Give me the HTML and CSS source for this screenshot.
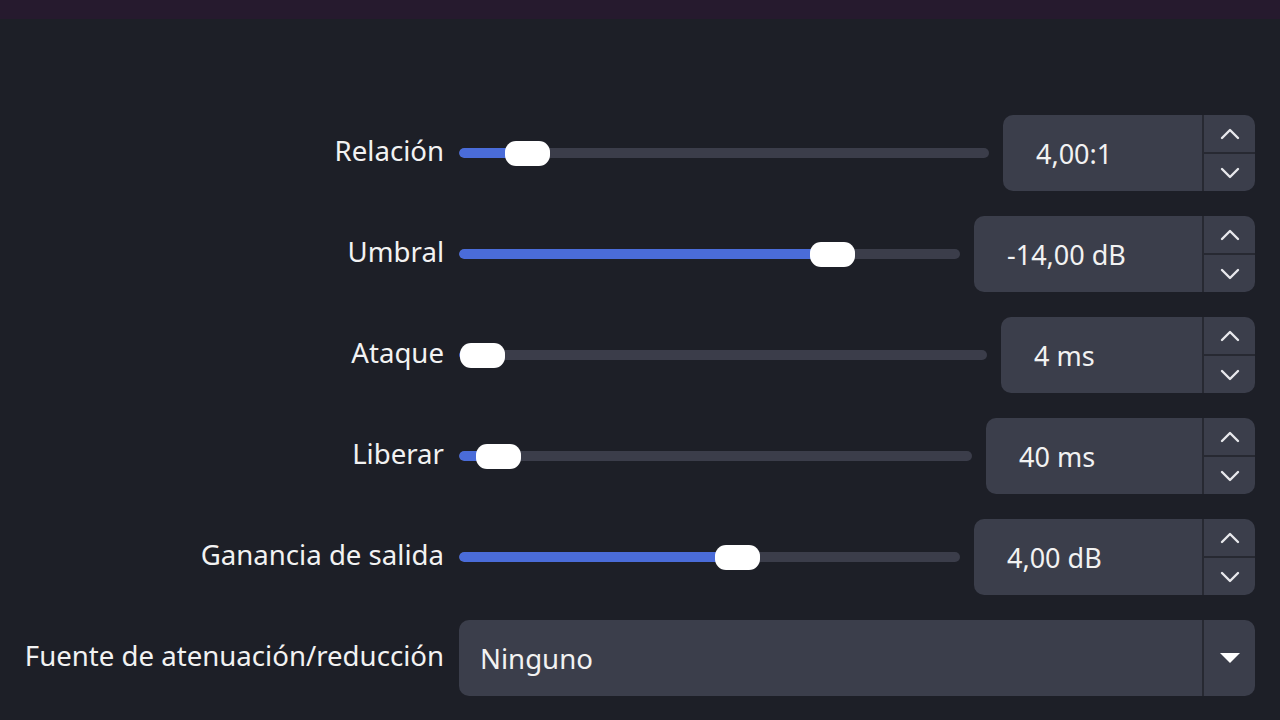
FILE: index.html
```html
<!DOCTYPE html>
<html lang="es">
<head>
    <meta charset="UTF-8">
    <meta name="viewport" content="width=device-width, initial-scale=1.0">
    <title>Compresor</title>
    <link rel="stylesheet" href="styles.css">
</head>
<body>
    <div class="top-strip"></div>
    <div class="form">
        <div class="label">Relación</div>
        <div class="field">
            <div class="slider" style="--p: 0.095">
                <div class="track"><div class="fill"></div></div>
                <div class="handle"></div>
            </div>
            <div class="spin spin-ratio">
                <div class="spin-value">4,00:1</div>
                <div class="spin-buttons">
                    <div class="spin-btn"><svg width="20" height="12" viewBox="0 0 20 12"><path d="M2 10 L10 2 L18 10" /></svg></div>
                    <div class="spin-btn"><svg width="20" height="12" viewBox="0 0 20 12"><path d="M2 2 L10 10 L18 2" /></svg></div>
                </div>
            </div>
        </div>

        <div class="label">Umbral</div>
        <div class="field">
            <div class="slider" style="--p: 0.77">
                <div class="track"><div class="fill"></div></div>
                <div class="handle"></div>
            </div>
            <div class="spin spin-threshold">
                <div class="spin-value">-14,00 dB</div>
                <div class="spin-buttons">
                    <div class="spin-btn"><svg width="20" height="12" viewBox="0 0 20 12"><path d="M2 10 L10 2 L18 10" /></svg></div>
                    <div class="spin-btn"><svg width="20" height="12" viewBox="0 0 20 12"><path d="M2 2 L10 10 L18 2" /></svg></div>
                </div>
            </div>
        </div>

        <div class="label">Ataque</div>
        <div class="field">
            <div class="slider" style="--p: 0.002">
                <div class="track"><div class="fill"></div></div>
                <div class="handle"></div>
            </div>
            <div class="spin spin-attack">
                <div class="spin-value">4 ms</div>
                <div class="spin-buttons">
                    <div class="spin-btn"><svg width="20" height="12" viewBox="0 0 20 12"><path d="M2 10 L10 2 L18 10" /></svg></div>
                    <div class="spin-btn"><svg width="20" height="12" viewBox="0 0 20 12"><path d="M2 2 L10 10 L18 2" /></svg></div>
                </div>
            </div>
        </div>

        <div class="label">Liberar</div>
        <div class="field">
            <div class="slider" style="--p: 0.036">
                <div class="track"><div class="fill"></div></div>
                <div class="handle"></div>
            </div>
            <div class="spin spin-release">
                <div class="spin-value">40 ms</div>
                <div class="spin-buttons">
                    <div class="spin-btn"><svg width="20" height="12" viewBox="0 0 20 12"><path d="M2 10 L10 2 L18 10" /></svg></div>
                    <div class="spin-btn"><svg width="20" height="12" viewBox="0 0 20 12"><path d="M2 2 L10 10 L18 2" /></svg></div>
                </div>
            </div>
        </div>

        <div class="label">Ganancia de salida</div>
        <div class="field">
            <div class="slider" style="--p: 0.561">
                <div class="track"><div class="fill"></div></div>
                <div class="handle"></div>
            </div>
            <div class="spin spin-gain">
                <div class="spin-value">4,00 dB</div>
                <div class="spin-buttons">
                    <div class="spin-btn"><svg width="20" height="12" viewBox="0 0 20 12"><path d="M2 10 L10 2 L18 10" /></svg></div>
                    <div class="spin-btn"><svg width="20" height="12" viewBox="0 0 20 12"><path d="M2 2 L10 10 L18 2" /></svg></div>
                </div>
            </div>
        </div>

        <div class="label">Fuente de atenuación/reducción</div>
        <div class="field">
            <div class="combo">
                <div class="combo-value">Ninguno</div>
                <div class="combo-arrow">
                    <svg width="22" height="12" viewBox="0 0 22 12"><polygon points="1,1 21,1 11,11" /></svg>
                </div>
            </div>
        </div>
    </div>
</body>
</html>
```

FILE: styles.css
```css
body, html {
    margin: 0;
    padding: 0;
    width: 100%;
    height: 100%;
    background: #1d1f27;
    overflow: hidden;
    font-family: 'Noto Sans', 'Open Sans', sans-serif;
    color: #f2f2f2;
}

.top-strip {
    height: 19px;
    background: #261a2e;
}

.form {
    display: grid;
    grid-template-columns: 428px 1fr;
    grid-auto-rows: 76px;
    column-gap: 15px;
    row-gap: 25px;
    padding: 96px 25px 0 16px;
}

.label {
    font-size: 27.6px;
    text-align: right;
    white-space: nowrap;
    align-self: center;
    padding-bottom: 6px;
}

.field {
    display: flex;
    align-items: center;
    gap: 14px;
}

.slider {
    flex: 1;
    position: relative;
    height: 25px;
    display: flex;
    align-items: center;
}

.track {
    position: relative;
    width: 100%;
    height: 10px;
    border-radius: 5px;
    background: #3b3d4a;
    overflow: hidden;
}

.fill {
    height: 100%;
    width: calc((100% - 45px) * var(--p) + 22px);
    background: #4a6cd9;
    border-radius: 5px;
}

.handle {
    position: absolute;
    top: 0;
    left: calc((100% - 45px) * var(--p));
    width: 45px;
    height: 25px;
    border-radius: 11px;
    background: #ffffff;
}

.spin {
    height: 76px;
    display: flex;
    background: #3b3e4b;
    border-radius: 10px;
    overflow: hidden;
}

.spin-ratio { width: 252px; }
.spin-threshold { width: 281px; }
.spin-attack { width: 254px; }
.spin-release { width: 269px; }
.spin-gain { width: 281px; }

.spin-value {
    flex: 1;
    display: flex;
    align-items: center;
    padding-left: 33px;
    font-size: 27px;
}

.spin-buttons {
    width: 51px;
    display: flex;
    flex-direction: column;
    border-left: 2px solid #272932;
}

.spin-btn {
    flex: 1;
    display: flex;
    align-items: center;
    justify-content: center;
}

.spin-btn + .spin-btn {
    border-top: 2px solid #272932;
}

.spin-btn svg path {
    fill: none;
    stroke: #e8e8ec;
    stroke-width: 2.4;
    stroke-linecap: round;
    stroke-linejoin: round;
}

.combo {
    flex: 1;
    height: 76px;
    display: flex;
    background: #3b3e4b;
    border-radius: 10px;
    overflow: hidden;
}

.combo-value {
    flex: 1;
    display: flex;
    align-items: center;
    padding-left: 21px;
    font-size: 27.6px;
}

.combo-arrow {
    width: 51px;
    border-left: 2px solid #272932;
    display: flex;
    align-items: center;
    justify-content: center;
}

.combo-arrow svg polygon {
    fill: #ffffff;
}
```
